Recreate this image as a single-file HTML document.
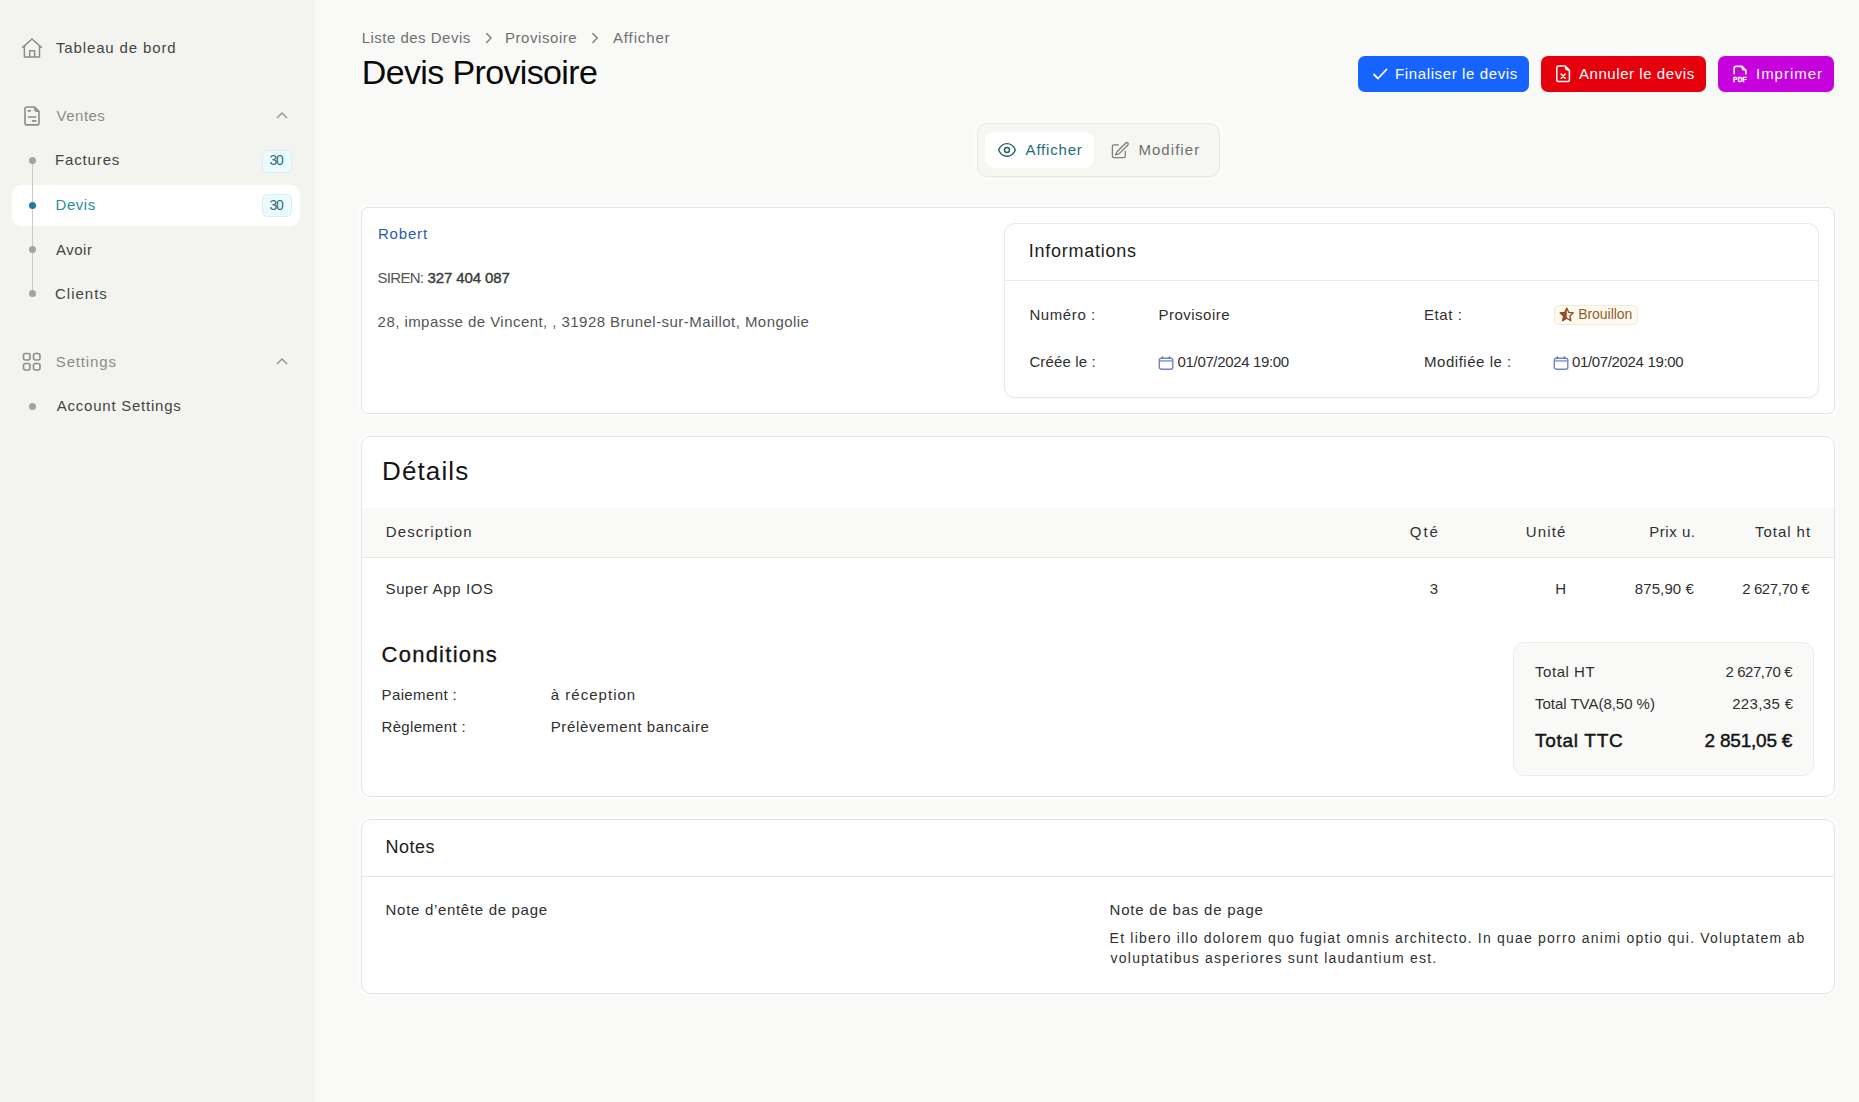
<!DOCTYPE html>
<html><head><meta charset="utf-8">
<style>
html,body{margin:0;padding:0;width:1859px;height:1102px;overflow:hidden;background:#f9f9f8;font-family:"Liberation Sans",sans-serif;}
.a{position:absolute;box-sizing:border-box;}
.t{position:absolute;white-space:pre;line-height:1;font-family:"Liberation Sans",sans-serif;}
svg{position:absolute;overflow:visible;}
</style></head><body>
<!-- sidebar -->
<div class="a" style="left:0;top:0;width:315px;height:1102px;background:#f3f4f0"></div>
<div class="a" style="left:315px;top:0;width:1px;height:1102px;background:#f6f6f3"></div>
<div class="a" style="left:12px;top:185px;width:288px;height:41px;background:#ffffff;border-radius:9px"></div>
<div class="a" style="left:31.5px;top:161px;width:1px;height:133px;background:#c9c9c9"></div>
<div class="a" style="left:28.5px;top:157px;width:7px;height:7px;border-radius:50%;background:#a3a3a3"></div>
<div class="a" style="left:28.5px;top:202px;width:7px;height:7px;border-radius:50%;background:#1f78a8"></div>
<div class="a" style="left:28.5px;top:246px;width:7px;height:7px;border-radius:50%;background:#a3a3a3"></div>
<div class="a" style="left:28.5px;top:290px;width:7px;height:7px;border-radius:50%;background:#a3a3a3"></div>
<div class="a" style="left:28.5px;top:402.5px;width:7px;height:7px;border-radius:50%;background:#a3a3a3"></div>
<div class="a" style="left:262px;top:149.5px;width:30px;height:23px;border-radius:5px;background:#ebfafc;border:1px solid #d8f0f4"></div>
<div class="a" style="left:262px;top:194px;width:30px;height:23px;border-radius:5px;background:#ebfafc;border:1px solid #d8f0f4"></div>
<!-- home icon -->
<svg style="left:21px;top:37px" width="22" height="22" viewBox="0 0 22 22" fill="none" stroke="#8c8c8c" stroke-width="1.5" stroke-linejoin="round" stroke-linecap="round"><path d="M1.6 10.4 L11 2 L20.4 10.4"/><path d="M3.4 8.8 V20 H18.5 V8.8"/><path d="M8.7 20 V13.8 H13.6 V20"/></svg>
<!-- doc icon -->
<svg style="left:23px;top:105px" width="18" height="22" viewBox="0 0 18 22" fill="none" stroke="#8c8c8c" stroke-width="1.6" stroke-linejoin="round" stroke-linecap="round"><path d="M11.6 2 H4 A2 2 0 0 0 2 4 V17.9 A2 2 0 0 0 4 19.9 H14 A2 2 0 0 0 16 17.9 V6.4 Z"/><path d="M11.9 3.2 Q11.6 6.4 14.8 6.1" stroke-width="1.8"/><path d="M5.3 5.9 H7.4 M5.4 12 H12.8 M9.6 15.9 H12.8"/></svg>
<svg style="left:275px;top:110px" width="14" height="10" viewBox="0 0 14 10" fill="none" stroke="#909090" stroke-width="1.4"><path d="M2 8 L7 3 L12 8"/></svg>
<!-- settings icon -->
<svg style="left:22px;top:352px" width="20" height="20" viewBox="0 0 20 20" fill="none" stroke="#8d8d8d" stroke-width="1.6"><rect x="1.5" y="1.5" width="6.5" height="6.5" rx="2"/><rect x="11.5" y="1.5" width="6.5" height="6.5" rx="2"/><rect x="1.5" y="11.5" width="6.5" height="6.5" rx="2"/><rect x="11.5" y="11.5" width="6.5" height="6.5" rx="2"/></svg>
<svg style="left:275px;top:356px" width="14" height="10" viewBox="0 0 14 10" fill="none" stroke="#909090" stroke-width="1.4"><path d="M2 8 L7 3 L12 8"/></svg>

<!-- breadcrumb chevrons -->
<svg style="left:484px;top:31px" width="10" height="14" viewBox="0 0 10 14" fill="none" stroke="#858585" stroke-width="1.5" stroke-linecap="round"><path d="M2.7 2.6 L7 6.9 L2.7 11.4"/></svg>
<svg style="left:590px;top:31px" width="10" height="14" viewBox="0 0 10 14" fill="none" stroke="#858585" stroke-width="1.5" stroke-linecap="round"><path d="M2.9 2.6 L7.2 6.9 L2.9 11.4"/></svg>

<!-- buttons -->
<div class="a" style="left:1358px;top:56px;width:171px;height:36px;border-radius:7px;background:#1763fd"></div>
<div class="a" style="left:1541px;top:56px;width:165px;height:36px;border-radius:7px;background:#e5000b"></div>
<div class="a" style="left:1718px;top:56px;width:116px;height:36px;border-radius:7px;background:#c700de"></div>
<svg style="left:1372px;top:66px" width="16" height="16" viewBox="0 0 16 16" fill="none" stroke="#fff" stroke-width="1.8" stroke-linecap="round" stroke-linejoin="round"><path d="M2 8.5 L6 12.5 L14.5 3.5"/></svg>
<svg style="left:1555px;top:64px" width="16" height="20" viewBox="0 0 16 20" fill="none" stroke="#fff" stroke-width="1.5" stroke-linejoin="round" stroke-linecap="round"><path d="M10.3 2.1 H3.6 A1.8 1.8 0 0 0 1.8 3.9 V15.8 A1.8 1.8 0 0 0 3.6 17.6 H12.6 A1.8 1.8 0 0 0 14.4 15.8 V6.2 Z"/><path d="M10.6 3.2 Q10.4 6 13.3 5.8" stroke-width="1.7"/><path d="M6.2 10 L10.2 14.2 M10.2 10 L6.2 14.2" stroke-width="1.6"/></svg>
<svg style="left:1732px;top:64px" width="16" height="20" viewBox="0 0 16 20" fill="none" stroke="#fff" stroke-width="1.6" stroke-linejoin="round" stroke-linecap="round"><path d="M2.2 9.8 V4.2 A1.8 1.8 0 0 1 4 2.4 H10 L13.9 6.3 V10"/><path d="M10.3 3.4 Q10.1 6.2 13 6" stroke-width="1.7"/></svg>
<svg style="left:1720px;top:60px" width="40" height="30" viewBox="0 0 40 30"><text x="13.1" y="21.8" font-family="Liberation Sans" font-weight="700" font-size="8" fill="#fff" stroke="#fff" stroke-width="0.35" textLength="13.6" lengthAdjust="spacingAndGlyphs">PDF</text></svg>

<!-- tabs -->
<div class="a" style="left:977px;top:123px;width:243px;height:54px;border-radius:10px;background:#f6f6f3;border:1px solid #e7e7e5;box-shadow:0 0 0 3px rgba(255,255,255,0.55),0 1px 1px rgba(0,0,0,0.05)"></div>
<div class="a" style="left:985px;top:132px;width:109px;height:36px;border-radius:9px;background:#ffffff"></div>
<svg style="left:997px;top:141px" width="20" height="18" viewBox="0 0 20 18" fill="none" stroke="#215f66" stroke-width="1.4"><path d="M1.6 9 C3.4 4.9 6.4 2.6 10 2.6 C13.6 2.6 16.6 4.9 18.4 9 C16.6 13.1 13.6 15.3 10 15.3 C6.4 15.3 3.4 13.1 1.6 9 Z"/><circle cx="10" cy="9" r="2.5"/></svg>
<svg style="left:1111px;top:140px" width="19" height="19" viewBox="0 0 19 19" fill="none" stroke="#7f7f7f" stroke-width="1.3" stroke-linejoin="round" stroke-linecap="round"><path d="M7.4 4.8 H3 Q1.4 4.8 1.4 6.4 V16 Q1.4 17.6 3 17.6 H12.7 Q14.3 17.6 14.3 16 V11.4"/><path d="M6 11.8 L14.6 3.2 Q15.8 2 16.9 3 Q17.9 4.1 16.7 5.3 L8 13.9 L4.5 14.9 Z"/></svg>

<!-- card 1 -->
<div class="a" style="left:361px;top:207px;width:1474px;height:207px;border-radius:7px;background:#fff;border:1px solid #e3e3e3;box-shadow:0 0 0 3px rgba(255,255,255,0.5)"></div>
<div class="a" style="left:1004px;top:223px;width:815px;height:175px;border-radius:11px;background:#fff;border:1px solid #e9e9e9;box-shadow:0 1px 2px rgba(0,0,0,0.04)"></div>
<div class="a" style="left:1005px;top:280px;width:813px;height:1px;background:#e9e9e9"></div>
<div class="a" style="left:1553.5px;top:305px;width:84px;height:20px;border-radius:5px;background:#fffaef;border:1px solid #f4ead6"></div>
<svg style="left:1558px;top:306px" width="18" height="18" viewBox="0 0 18 18"><path d="M8.75 2 L6.81 6.33 L2.09 6.84 L5.61 10.02 L4.63 14.66 L8.75 12.3 Z" fill="#b3461b"/><path d="M8.75 2 L10.69 6.33 L15.41 6.84 L11.89 10.02 L12.87 14.66 L8.75 12.3 L4.63 14.66 L5.61 10.02 L2.09 6.84 L6.81 6.33 Z" fill="none" stroke="#8a4a22" stroke-width="1.3" stroke-linejoin="round"/></svg>
<svg style="left:1158px;top:355px" width="16" height="16" viewBox="0 0 16 16" fill="none" stroke-width="1.4"><rect x="1.3" y="3.3" width="13.5" height="10.9" rx="2" stroke="#7186be"/><path d="M1.5 5.9 H14.6" stroke="#8e9de0" stroke-width="1.6"/><path d="M4.4 1.4 V3.6 M11.5 1.4 V3.6" stroke="#4f6890"/></svg>
<svg style="left:1553px;top:355px" width="16" height="16" viewBox="0 0 16 16" fill="none" stroke-width="1.4"><rect x="1.3" y="3.3" width="13.5" height="10.9" rx="2" stroke="#7186be"/><path d="M1.5 5.9 H14.6" stroke="#8e9de0" stroke-width="1.6"/><path d="M4.4 1.4 V3.6 M11.5 1.4 V3.6" stroke="#4f6890"/></svg>

<!-- card 2 -->
<div class="a" style="left:361px;top:436px;width:1474px;height:361px;border-radius:10px;background:#fff;border:1px solid #e3e3e3;box-shadow:0 0 0 3px rgba(255,255,255,0.5)"></div>
<div class="a" style="left:362px;top:508px;width:1472px;height:50px;background:#f9f9f7;border-bottom:1px solid #e6e6e6"></div>
<div class="a" style="left:1513px;top:642px;width:301px;height:134px;border-radius:11px;background:#f9f9f8;border:1px solid #ececec"></div>

<!-- notes -->
<div class="a" style="left:361px;top:819px;width:1474px;height:175px;border-radius:10px;background:#fff;border:1px solid #e3e3e3;box-shadow:0 0 0 3px rgba(255,255,255,0.5)"></div>
<div class="a" style="left:362px;top:876px;width:1472px;height:1px;background:#e6e6e6"></div>

<div class="t" style="left:56.0px;top:39.7px;font-size:15px;font-weight:400;color:#444444;letter-spacing:0.857px">Tableau de bord</div>
<div class="t" style="left:56.6px;top:107.7px;font-size:15px;font-weight:400;color:#8b8b8b;letter-spacing:0.480px">Ventes</div>
<div class="t" style="left:55.0px;top:151.7px;font-size:15px;font-weight:400;color:#444444;letter-spacing:0.857px">Factures</div>
<div class="t" style="left:55.5px;top:196.6px;font-size:15px;font-weight:400;color:#2d8c9e;letter-spacing:0.550px">Devis</div>
<div class="t" style="left:56.0px;top:241.8px;font-size:15px;font-weight:400;color:#444444;letter-spacing:0.500px">Avoir</div>
<div class="t" style="left:55.0px;top:285.8px;font-size:15px;font-weight:400;color:#444444;letter-spacing:1.000px">Clients</div>
<div class="t" style="left:55.8px;top:354.1px;font-size:15px;font-weight:400;color:#8b8b8b;letter-spacing:0.843px">Settings</div>
<div class="t" style="left:56.8px;top:398.0px;font-size:15px;font-weight:400;color:#444444;letter-spacing:0.760px">Account Settings</div>
<div class="t" style="left:269.6px;top:153.0px;font-size:14px;font-weight:400;color:#2f6e7c;letter-spacing:-1.300px">30</div>
<div class="t" style="left:269.6px;top:198.0px;font-size:14px;font-weight:400;color:#2f6e7c;letter-spacing:-1.300px">30</div>
<div class="t" style="left:361.7px;top:29.9px;font-size:15px;font-weight:400;color:#707070;letter-spacing:0.486px">Liste des Devis</div>
<div class="t" style="left:505.0px;top:29.9px;font-size:15px;font-weight:400;color:#707070;letter-spacing:0.556px">Provisoire</div>
<div class="t" style="left:613.0px;top:29.9px;font-size:15px;font-weight:400;color:#707070;letter-spacing:0.857px">Afficher</div>
<div class="t" style="left:361.8px;top:54.7px;font-size:34px;font-weight:400;color:#0a0a0a;letter-spacing:-0.640px">Devis Provisoire</div>
<div class="t" style="left:1395.0px;top:65.8px;font-size:15px;font-weight:400;color:#ffffff;letter-spacing:0.624px">Finaliser le devis</div>
<div class="t" style="left:1579.0px;top:65.8px;font-size:15px;font-weight:400;color:#ffffff;letter-spacing:0.560px">Annuler le devis</div>
<div class="t" style="left:1756.0px;top:65.8px;font-size:15px;font-weight:400;color:#ffffff;letter-spacing:0.971px">Imprimer</div>
<div class="t" style="left:1025.6px;top:141.9px;font-size:15px;font-weight:400;color:#1f6c77;letter-spacing:0.800px">Afficher</div>
<div class="t" style="left:1138.4px;top:141.8px;font-size:15px;font-weight:400;color:#6f6f6f;letter-spacing:1.057px">Modifier</div>
<div class="t" style="left:377.9px;top:225.9px;font-size:15px;font-weight:400;color:#2c5aa8;letter-spacing:0.840px">Robert</div>
<div class="t" style="left:377.6px;top:269.8px;font-size:15px;font-weight:400;color:#555555;letter-spacing:-0.740px">SIREN:</div>
<div class="t" style="left:427.5px;top:269.8px;font-size:15px;font-weight:400;color:#3a3a3a;letter-spacing:-0.110px;-webkit-text-stroke:0.4px #3a3a3a">327 404 087</div>
<div class="t" style="left:377.6px;top:313.7px;font-size:15px;font-weight:400;color:#555555;letter-spacing:0.447px">28, impasse de Vincent, , 31928 Brunel-sur-Maillot, Mongolie</div>
<div class="t" style="left:1028.8px;top:241.7px;font-size:18px;font-weight:400;color:#1c1c1c;letter-spacing:0.745px">Informations</div>
<div class="t" style="left:1029.4px;top:306.9px;font-size:15px;font-weight:400;color:#303030;letter-spacing:0.600px">Numéro :</div>
<div class="t" style="left:1158.4px;top:306.9px;font-size:15px;font-weight:400;color:#303030;letter-spacing:0.500px">Provisoire</div>
<div class="t" style="left:1424.0px;top:306.9px;font-size:15px;font-weight:400;color:#303030;letter-spacing:0.600px">Etat :</div>
<div class="t" style="left:1578.2px;top:306.7px;font-size:14px;font-weight:400;color:#8d5f2e;letter-spacing:-0.037px">Brouillon</div>
<div class="t" style="left:1029.4px;top:353.6px;font-size:15px;font-weight:400;color:#303030;letter-spacing:0.133px">Créée le :</div>
<div class="t" style="left:1177.6px;top:353.6px;font-size:15px;font-weight:400;color:#303030;letter-spacing:-0.353px">01/07/2024 19:00</div>
<div class="t" style="left:1424.0px;top:353.6px;font-size:15px;font-weight:400;color:#303030;letter-spacing:0.533px">Modifiée le :</div>
<div class="t" style="left:1572.0px;top:353.6px;font-size:15px;font-weight:400;color:#303030;letter-spacing:-0.347px">01/07/2024 19:00</div>
<div class="t" style="left:382.0px;top:458.0px;font-size:26px;font-weight:400;color:#141414;letter-spacing:1.117px">Détails</div>
<div class="t" style="left:385.8px;top:523.9px;font-size:15px;font-weight:400;color:#303030;letter-spacing:1.080px">Description</div>
<div class="t" style="left:1409.8px;top:523.9px;font-size:15px;font-weight:400;color:#303030;letter-spacing:1.950px">Qté</div>
<div class="t" style="left:1525.7px;top:523.9px;font-size:15px;font-weight:400;color:#303030;letter-spacing:1.150px">Unité</div>
<div class="t" style="left:1649.2px;top:523.9px;font-size:15px;font-weight:400;color:#303030;letter-spacing:0.550px">Prix u.</div>
<div class="t" style="left:1755.0px;top:523.9px;font-size:15px;font-weight:400;color:#303030;letter-spacing:0.957px">Total ht</div>
<div class="t" style="left:385.5px;top:580.8px;font-size:15px;font-weight:400;color:#303030;letter-spacing:0.625px">Super App IOS</div>
<div class="t" style="left:1429.7px;top:580.8px;font-size:15px;font-weight:400;color:#303030;letter-spacing:0.000px">3</div>
<div class="t" style="left:1555.3px;top:580.8px;font-size:15px;font-weight:400;color:#303030;letter-spacing:0.000px">H</div>
<div class="t" style="left:1634.8px;top:580.8px;font-size:15px;font-weight:400;color:#303030;letter-spacing:0.100px">875,90 €</div>
<div class="t" style="left:1742.2px;top:580.8px;font-size:15px;font-weight:400;color:#303030;letter-spacing:-0.389px">2 627,70 €</div>
<div class="t" style="left:381.5px;top:643.7px;font-size:22px;font-weight:400;color:#141414;letter-spacing:1.256px;-webkit-text-stroke:0.3px #141414">Conditions</div>
<div class="t" style="left:381.5px;top:687.3px;font-size:15px;font-weight:400;color:#303030;letter-spacing:0.389px">Paiement :</div>
<div class="t" style="left:550.7px;top:687.3px;font-size:15px;font-weight:400;color:#303030;letter-spacing:1.030px">à réception</div>
<div class="t" style="left:381.5px;top:719.4px;font-size:15px;font-weight:400;color:#303030;letter-spacing:0.320px">Règlement :</div>
<div class="t" style="left:550.7px;top:719.4px;font-size:15px;font-weight:400;color:#303030;letter-spacing:0.647px">Prélèvement bancaire</div>
<div class="t" style="left:1535.0px;top:664.0px;font-size:15px;font-weight:400;color:#303030;letter-spacing:0.543px">Total HT</div>
<div class="t" style="left:1725.5px;top:664.0px;font-size:15px;font-weight:400;color:#303030;letter-spacing:-0.433px">2 627,70 €</div>
<div class="t" style="left:1535.0px;top:696.0px;font-size:15px;font-weight:400;color:#303030;letter-spacing:-0.025px">Total TVA(8,50 %)</div>
<div class="t" style="left:1732.2px;top:696.0px;font-size:15px;font-weight:400;color:#303030;letter-spacing:0.343px">223,35 €</div>
<div class="t" style="left:1535.0px;top:731.0px;font-size:19px;font-weight:400;color:#141414;letter-spacing:0.713px;-webkit-text-stroke:0.45px #141414">Total TTC</div>
<div class="t" style="left:1704.6px;top:731.0px;font-size:19px;font-weight:400;color:#141414;letter-spacing:-0.222px;-webkit-text-stroke:0.45px #141414">2 851,05 €</div>
<div class="t" style="left:385.6px;top:838.3px;font-size:18px;font-weight:400;color:#1c1c1c;letter-spacing:0.450px">Notes</div>
<div class="t" style="left:385.6px;top:902.4px;font-size:15px;font-weight:400;color:#303030;letter-spacing:0.690px">Note d’entête de page</div>
<div class="t" style="left:1109.6px;top:902.2px;font-size:15px;font-weight:400;color:#303030;letter-spacing:0.783px">Note de bas de page</div>
<div class="t" style="left:1109.6px;top:930.7px;font-size:14px;font-weight:400;color:#303030;letter-spacing:1.201px">Et libero illo dolorem quo fugiat omnis architecto. In quae porro animi optio qui. Voluptatem ab</div>
<div class="t" style="left:1110.6px;top:951.2px;font-size:14px;font-weight:400;color:#303030;letter-spacing:1.219px">voluptatibus asperiores sunt laudantium est.</div>
</body></html>
